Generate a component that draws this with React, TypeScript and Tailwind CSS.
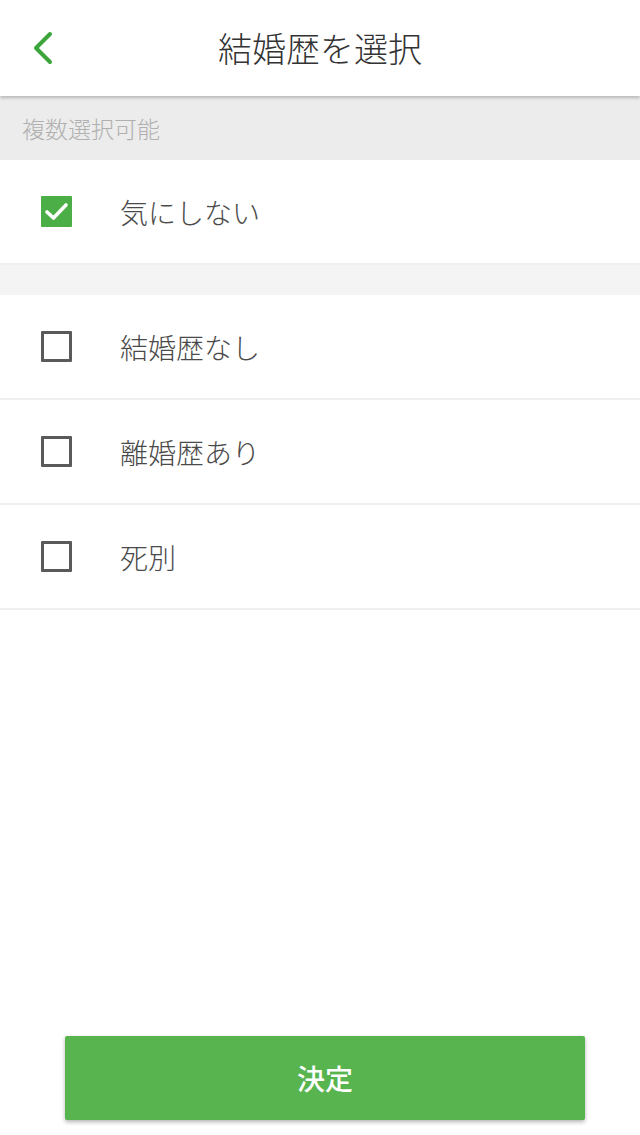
const options = [
    { label: "結婚歴なし", checked: false },
    { label: "離婚歴あり", checked: false },
    { label: "死別", checked: false },
];

function CheckBox({ checked }: { checked: boolean }) {
    if (checked) {
        return (
            <div className="w-[31px] h-[31px] bg-[#4cae47] rounded-[1px] flex items-center justify-center">
                <svg width="31" height="31" viewBox="0 0 31 31">
                    <polyline points="6,16 12.5,22 25,9" fill="none" stroke="white" strokeWidth="3.6" strokeLinecap="round" strokeLinejoin="round" />
                </svg>
            </div>
        );
    }
    return <div className="w-[31px] h-[31px] border-[3px] border-[#5a5a5a] rounded-[1px]"></div>;
}

function Row({ label, checked }: { label: string; checked: boolean }) {
    return (
        <div className="h-[105px] flex items-center bg-white border-b-2 border-[#efefef]">
            <div className="w-[120px] pl-[41px]">
                <CheckBox checked={checked} />
            </div>
            <span className="text-[28px] font-light text-[#4a4a4a] leading-none">{label}</span>
        </div>
    );
}

export default function App() {
    return (
        <div className="w-[640px] h-[1135px] flex flex-col bg-white" style={{ fontFamily: '"Noto Sans CJK JP", "Noto Sans", sans-serif' }}>
            <div className="relative z-10 h-[96px] bg-white flex items-center shadow-[0_2px_3px_rgba(0,0,0,0.22)]">
                <div className="w-[120px] pl-[30px]">
                    <svg width="26" height="34" viewBox="0 0 26 34">
                        <polyline points="20,3 6,17 20,31" fill="none" stroke="#3ba53b" strokeWidth="4" strokeLinecap="round" strokeLinejoin="round" />
                    </svg>
                </div>
                <h1 className="flex-1 text-center text-[34px] font-light text-[#333] leading-none pr-[120px]">結婚歴を選択</h1>
            </div>

            <div className="h-[64px] bg-[#ececec] flex items-center pl-[22px]">
                <span className="text-[23px] font-light text-[#b0b0b0] leading-none">複数選択可能</span>
            </div>

            <Row label="気にしない" checked={true} />

            <div className="h-[30px] bg-[#f4f4f4]"></div>

            {options.map((o) => (
                <Row key={o.label} label={o.label} checked={o.checked} />
            ))}

            <div className="mt-auto mb-[15px] pl-[65px]">
                <button className="w-[520px] h-[84px] bg-[#58b44f] rounded-[2px] shadow-[0_2px_4px_rgba(0,0,0,0.3)] text-white text-[28px] font-medium">
                    決定
                </button>
            </div>
        </div>
    );
}
